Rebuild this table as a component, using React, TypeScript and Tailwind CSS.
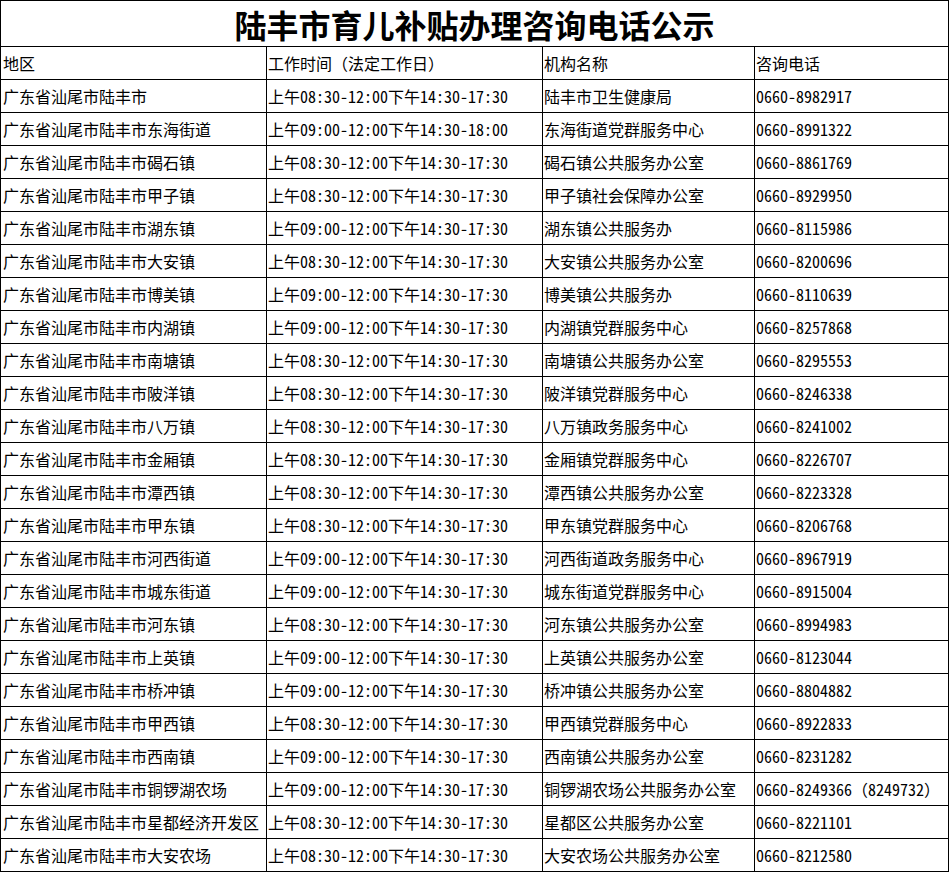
const rows: [string, string, string, string][] = [
  ["广东省汕尾市陆丰市", "上午08:30-12:00下午14:30-17:30", "陆丰市卫生健康局", "0660-8982917"],
  ["广东省汕尾市陆丰市东海街道", "上午09:00-12:00下午14:30-18:00", "东海街道党群服务中心", "0660-8991322"],
  ["广东省汕尾市陆丰市碣石镇", "上午08:30-12:00下午14:30-17:30", "碣石镇公共服务办公室", "0660-8861769"],
  ["广东省汕尾市陆丰市甲子镇", "上午08:30-12:00下午14:30-17:30", "甲子镇社会保障办公室", "0660-8929950"],
  ["广东省汕尾市陆丰市湖东镇", "上午09:00-12:00下午14:30-17:30", "湖东镇公共服务办", "0660-8115986"],
  ["广东省汕尾市陆丰市大安镇", "上午08:30-12:00下午14:30-17:30", "大安镇公共服务办公室", "0660-8200696"],
  ["广东省汕尾市陆丰市博美镇", "上午09:00-12:00下午14:30-17:30", "博美镇公共服务办", "0660-8110639"],
  ["广东省汕尾市陆丰市内湖镇", "上午09:00-12:00下午14:30-17:30", "内湖镇党群服务中心", "0660-8257868"],
  ["广东省汕尾市陆丰市南塘镇", "上午08:30-12:00下午14:30-17:30", "南塘镇公共服务办公室", "0660-8295553"],
  ["广东省汕尾市陆丰市陂洋镇", "上午08:30-12:00下午14:30-17:30", "陂洋镇党群服务中心", "0660-8246338"],
  ["广东省汕尾市陆丰市八万镇", "上午08:30-12:00下午14:30-17:30", "八万镇政务服务中心", "0660-8241002"],
  ["广东省汕尾市陆丰市金厢镇", "上午08:30-12:00下午14:30-17:30", "金厢镇党群服务中心", "0660-8226707"],
  ["广东省汕尾市陆丰市潭西镇", "上午08:30-12:00下午14:30-17:30", "潭西镇公共服务办公室", "0660-8223328"],
  ["广东省汕尾市陆丰市甲东镇", "上午08:30-12:00下午14:30-17:30", "甲东镇党群服务中心", "0660-8206768"],
  ["广东省汕尾市陆丰市河西街道", "上午09:00-12:00下午14:30-17:30", "河西街道政务服务中心", "0660-8967919"],
  ["广东省汕尾市陆丰市城东街道", "上午09:00-12:00下午14:30-17:30", "城东街道党群服务中心", "0660-8915004"],
  ["广东省汕尾市陆丰市河东镇", "上午08:30-12:00下午14:30-17:30", "河东镇公共服务办公室", "0660-8994983"],
  ["广东省汕尾市陆丰市上英镇", "上午09:00-12:00下午14:30-17:30", "上英镇公共服务办公室", "0660-8123044"],
  ["广东省汕尾市陆丰市桥冲镇", "上午09:00-12:00下午14:30-17:30", "桥冲镇公共服务办公室", "0660-8804882"],
  ["广东省汕尾市陆丰市甲西镇", "上午08:30-12:00下午14:30-17:30", "甲西镇党群服务中心", "0660-8922833"],
  ["广东省汕尾市陆丰市西南镇", "上午09:00-12:00下午14:30-17:30", "西南镇公共服务办公室", "0660-8231282"],
  ["广东省汕尾市陆丰市铜锣湖农场", "上午09:00-12:00下午14:30-17:30", "铜锣湖农场公共服务办公室", "0660-8249366（8249732）"],
  ["广东省汕尾市陆丰市星都经济开发区", "上午08:30-12:00下午14:30-17:30", "星都区公共服务办公室", "0660-8221101"],
  ["广东省汕尾市陆丰市大安农场", "上午08:30-12:00下午14:30-17:30", "大安农场公共服务办公室", "0660-8212580"],
]

const header = ["地区", "工作时间（法定工作日）", "机构名称", "咨询电话"]
const pad = ["pl-[2px]", "pl-px", "pl-px", "pl-px"]

// keep full-width brackets full width (hwid would shrink them)
function Text({ text }: { text: string }) {
  const parts = text.split(/([（）])/)
  return (
    <>
      {parts.map((p, i) =>
        p === "（" || p === "）" ? (
          <span key={i} className="[font-feature-settings:normal]">{p}</span>
        ) : (
          p
        )
      )}
    </>
  )
}

function Cell({ text, col }: { text: string; col: number }) {
  return (
    <div className={`bg-white h-[32px] flex items-center whitespace-nowrap overflow-hidden text-[16px] leading-none text-black ${pad[col]}`}>
      <span><Text text={text} /></span>
    </div>
  )
}

export default function App() {
  return (
    <div className="min-h-screen bg-white">
      <div className="w-[949px] grid grid-cols-[265px_275px_211px_193px] gap-px bg-black p-px font-['Noto_Sans_CJK_SC',sans-serif] [font-feature-settings:'hwid']">
        <div className="col-span-4 bg-white h-[45px] flex items-center justify-center text-[32px] font-bold leading-none text-black [font-feature-settings:normal]">
          陆丰市育儿补贴办理咨询电话公示
        </div>
        {header.map((h, i) => (
          <Cell key={h} text={h} col={i} />
        ))}
        {rows.map((r, ri) =>
          r.map((c, ci) => <Cell key={`${ri}-${ci}`} text={c} col={ci} />)
        )}
      </div>
    </div>
  )
}
